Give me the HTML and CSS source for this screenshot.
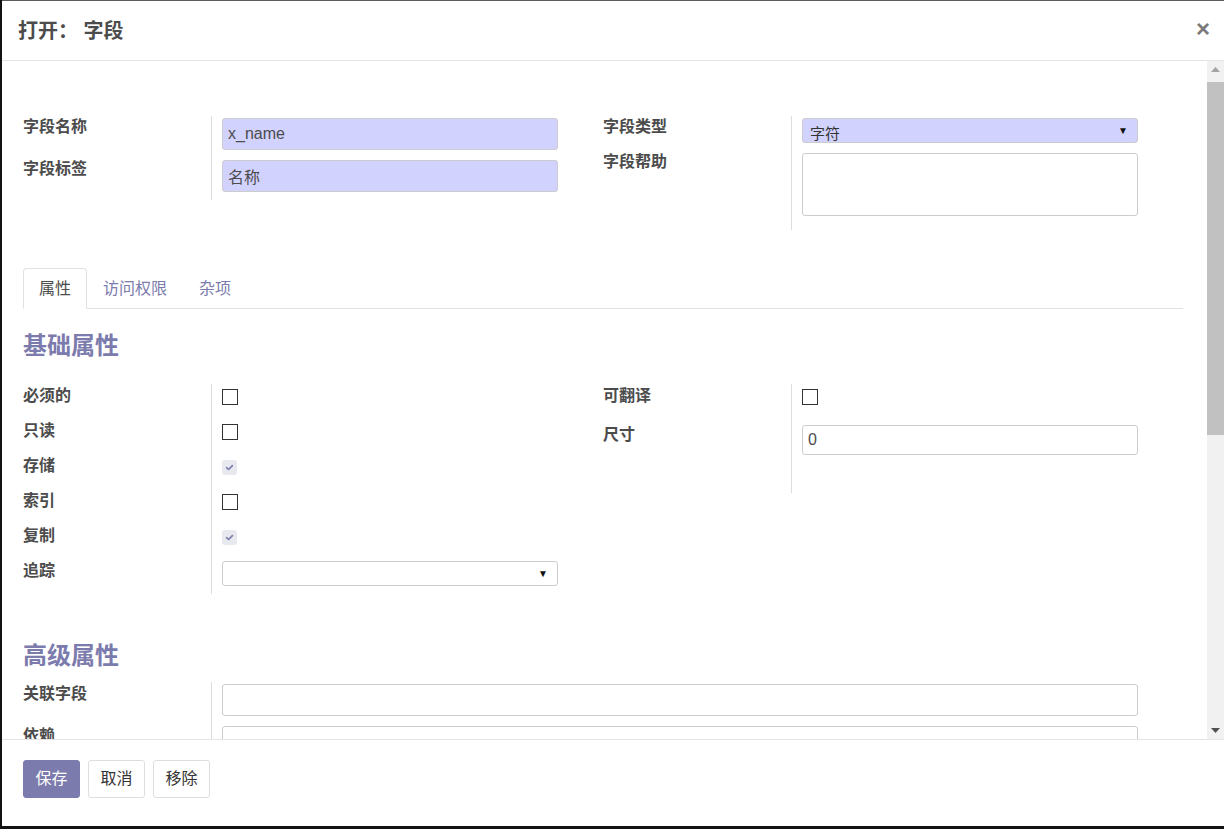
FILE: index.html
```html
<!DOCTYPE html>
<html lang="zh">
<head>
<meta charset="utf-8">
<title>打开： 字段</title>
<link rel="stylesheet" href="styles.css">
</head>
<body>
<div class="modal">
  <header class="mhead">
    <h4 class="mtitle">打开： 字段</h4>
    <span class="close">×</span>
  </header>
  <main class="mbody">
    <div class="scroll-area">
      <div class="sheet">
        <div class="cols cols-top">
          <div class="grp">
            <label class="lbl">字段名称</label>
            <div class="fld"><input class="inp req" type="text" value="x_name"></div>
            <label class="lbl">字段标签</label>
            <div class="fld"><input class="inp req" type="text" value="名称"></div>
          </div>
          <div class="grp">
            <label class="lbl">字段类型</label>
            <div class="fld"><div class="sel req"><span class="sel-val">字符</span><span class="caret">▼</span></div></div>
            <label class="lbl">字段帮助</label>
            <div class="fld fld-ta"><textarea class="ta"></textarea></div>
          </div>
        </div>

        <ul class="tabs">
          <li class="tab active">属性</li>
          <li class="tab">访问权限</li>
          <li class="tab">杂项</li>
        </ul>

        <h2 class="sect sect-basic">基础属性</h2>
        <div class="cols">
          <div class="grp">
            <label class="lbl lbl-c">必须的</label>
            <div class="fld fld-c"><span class="cb"></span></div>
            <label class="lbl lbl-c">只读</label>
            <div class="fld fld-c"><span class="cb"></span></div>
            <label class="lbl lbl-c">存储</label>
            <div class="fld fld-c"><span class="cb cb-dis"><svg viewBox="0 0 15 15" width="15" height="15"><path d="M4.6 7.6 L6.6 9.5 L10.4 5.6" fill="none" stroke="#7c7bad" stroke-width="1.6" stroke-linecap="round" stroke-linejoin="round"/></svg></span></div>
            <label class="lbl lbl-c">索引</label>
            <div class="fld fld-c"><span class="cb"></span></div>
            <label class="lbl lbl-c">复制</label>
            <div class="fld fld-c"><span class="cb cb-dis"><svg viewBox="0 0 15 15" width="15" height="15"><path d="M4.6 7.6 L6.6 9.5 L10.4 5.6" fill="none" stroke="#7c7bad" stroke-width="1.6" stroke-linecap="round" stroke-linejoin="round"/></svg></span></div>
            <label class="lbl lbl-c">追踪</label>
            <div class="fld"><div class="sel"><span class="sel-val"></span><span class="caret">▼</span></div></div>
          </div>
          <div class="grp">
            <label class="lbl lbl-c">可翻译</label>
            <div class="fld fld-c fld-c-tall"><span class="cb"></span></div>
            <label class="lbl lbl-size">尺寸</label>
            <div class="fld fld-size"><input class="inp inp-sm" type="text" value="0"></div>
          </div>
        </div>

        <h2 class="sect sect-adv">高级属性</h2>
        <div class="grp grp-full">
          <label class="lbl lbl-adv">关联字段</label>
          <div class="fld"><input class="inp" type="text" value=""></div>
          <label class="lbl lbl-adv">依赖</label>
          <div class="fld"><input class="inp" type="text" value=""></div>
          <label class="lbl lbl-adv">计算</label>
          <div class="fld"><textarea class="ta ta-big"></textarea></div>
        </div>
      </div>
    </div>
    <div class="vscroll" aria-hidden="true">
      <div class="vs-btn"><svg width="9" height="5" viewBox="0 0 9 5"><path d="M0 5L4.5 0L9 5Z" fill="#a3a3a3"/></svg></div>
      <div class="vs-track"><div class="vs-thumb"></div></div>
      <div class="vs-btn"><svg width="9" height="5" viewBox="0 0 9 5"><path d="M0 0L4.5 5L9 0Z" fill="#505050"/></svg></div>
    </div>
  </main>
  <footer class="mfoot">
    <button class="btn btn-primary" type="button">保存</button>
    <button class="btn" type="button">取消</button>
    <button class="btn" type="button">移除</button>
  </footer>
</div>
</body>
</html>
```

FILE: styles.css
```css
html, body {
  margin: 0;
  padding: 0;
  background: #121212;
  height: 100%;
  overflow: hidden;
}

body {
  font-family: "Liberation Sans", "Noto Sans CJK SC", sans-serif;
  font-size: 16px;
  color: #4c4c4c;
}

.modal {
  margin-left: 2px;
  width: 1222px;
  height: 826px;
  box-sizing: border-box;
  border-top: 1px solid #5c5c5c;
  background: #fff;
  display: flex;
  flex-direction: column;
}

/* header */
.mhead {
  height: 59px;
  flex: none;
  border-bottom: 1px solid #e5e5e5;
  display: flex;
  align-items: center;
  justify-content: space-between;
  padding: 0 14px 0 16px;
}

.mtitle {
  margin: 0;
  font-size: 20px;
  font-weight: 700;
  color: #4c4c4c;
  line-height: 28px;
  padding-top: 1px;
}

.close {
  font-size: 24px;
  font-weight: 700;
  color: #7a7a7a;
  line-height: 24px;
  margin-top: -3px;
}

/* body */
.mbody {
  flex: 1 1 auto;
  min-height: 0;
  display: flex;
}

.scroll-area {
  flex: 1 1 auto;
  min-width: 0;
  overflow: hidden;
}

.vscroll {
  flex: none;
  width: 17px;
  background: #f1f1f1;
  display: flex;
  flex-direction: column;
}
.vs-btn {
  flex: none;
  height: 17px;
  display: flex;
  align-items: center;
  justify-content: center;
}
.vs-btn svg {
  display: block;
}
.vs-track {
  flex: 1 1 auto;
  padding-top: 4px;
}
.vs-thumb {
  height: 353px;
  background: #c1c1c1;
}

.sheet {
  padding: 55px 24px 0 21px;
}

.cols {
  display: flex;
  align-items: flex-start;
}
.cols > .grp {
  flex: 1 1 0;
}

.grp {
  display: grid;
  grid-template-columns: 188px 1fr;
  align-content: start;
  align-items: start;
  padding-right: 45px;
}

.lbl {
  font-weight: 700;
  line-height: 22px;
  color: #4c4c4c;
  white-space: nowrap;
}

.fld {
  border-left: 1px solid #ddd;
  padding: 2px 0 8px 10px;
  align-self: stretch;
}

.inp {
  display: block;
  width: 100%;
  box-sizing: border-box;
  height: 32px;
  padding: 0 5px;
  border: 1px solid #ccc;
  border-radius: 3px;
  background: #fff;
  font-family: "Liberation Sans", "Noto Sans CJK SC", sans-serif;
  font-size: 16px;
  color: #4c4c4c;
  outline: none;
}
.inp.req {
  background: #d2d2ff;
}
.inp-sm {
  height: 30px;
}

.sel {
  height: 25px;
  box-sizing: border-box;
  border: 1px solid #ccc;
  border-radius: 3px;
  background: #fff;
  display: flex;
  align-items: center;
  justify-content: space-between;
  padding: 0 9px 0 7px;
  font-size: 15px;
  color: #333;
}
.sel.req {
  background: #d2d2ff;
}
.sel-val {
  padding-top: 3px;
}
.caret {
  font-size: 10px;
  color: #111;
  line-height: 10px;
}

.ta {
  display: block;
  width: 100%;
  box-sizing: border-box;
  height: 63px;
  border: 1px solid #ccc;
  border-radius: 3px;
  resize: none;
  font-family: "Liberation Sans", "Noto Sans CJK SC", sans-serif;
  font-size: 16px;
  outline: none;
}
.ta-big {
  height: 120px;
}
.fld-ta {
  padding-bottom: 14px;
}

.cols-top {
  margin-bottom: 38px;
}

/* tabs */
.tabs {
  list-style: none;
  margin: 0;
  padding: 0;
  display: flex;
  border-bottom: 1px solid #dee2e6;
}
.tab {
  padding: 9px 15px 8px;
  line-height: 22px;
  border: 1px solid transparent;
  border-radius: 4px 4px 0 0;
  margin-bottom: -1px;
  color: #7c7bad;
}
.tab.active {
  color: #4c4c4c;
  background: #fff;
  border-color: #dee2e6 #dee2e6 #fff;
}

/* section headings */
.sect {
  margin: 0;
  font-size: 24px;
  line-height: 32px;
  font-weight: 700;
  color: #7c7bad;
}
.sect-basic {
  margin: 21px 0 22px;
}
.sect-adv {
  margin: 46px 0 10px;
}

/* checkbox rows */
.lbl-c {
  padding-top: 1px;
}
.fld-c {
  padding: 5px 0 14px 10px;
}
.fld-c-tall {
  padding-bottom: 18px;
}
.lbl-size {
  padding-top: 1px;
}
.fld-size {
  padding-bottom: 38px;
}

.cb {
  display: block;
  width: 16px;
  height: 16px;
  box-sizing: border-box;
  border: 1px solid #333;
  background: #fff;
}
.cb-dis {
  width: 15px;
  height: 15px;
  margin-top: 1px;
  border: none;
  border-radius: 3px;
  background: #e8e9ef;
}
.cb-dis svg {
  display: block;
}

.lbl-adv {
  padding-top: 1px;
}

/* footer */
.mfoot {
  flex: none;
  height: 87px;
  box-sizing: border-box;
  border-top: 1px solid #e5e5e5;
  padding: 20px 21px 0;
  display: flex;
  align-items: flex-start;
  gap: 8px;
}

.btn {
  height: 38px;
  padding: 0 11.5px;
  display: flex;
  align-items: center;
  border: 1px solid #dedede;
  border-radius: 3px;
  background: #fff;
  color: #333;
  font-family: "Liberation Sans", "Noto Sans CJK SC", sans-serif;
  font-size: 16px;
  line-height: 22px;
  cursor: pointer;
}
.btn-primary {
  background: #7c7bad;
  border-color: #7c7bad;
  color: #fff;
}
```
